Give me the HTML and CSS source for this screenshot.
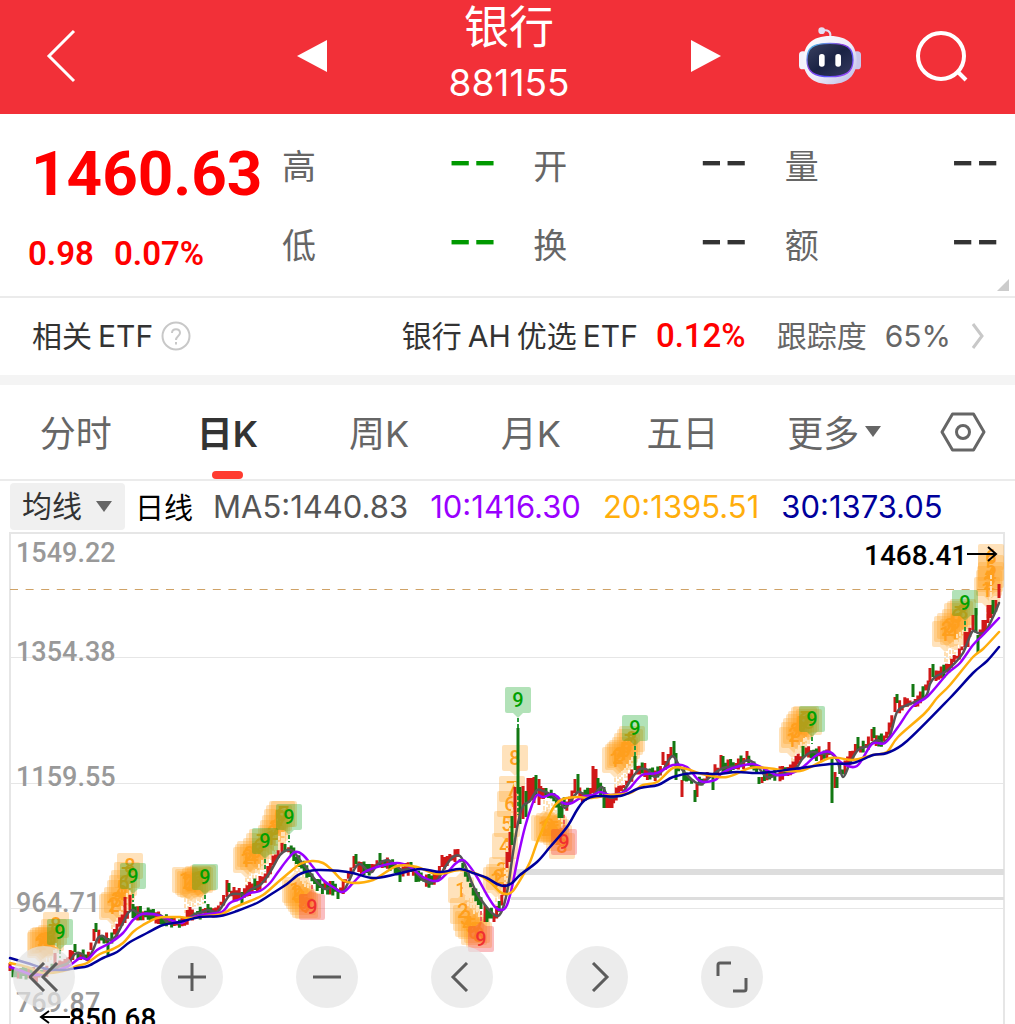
FILE: index.html
```html
<!DOCTYPE html>
<html lang="zh-CN">
<head>
<meta charset="utf-8">
<meta name="viewport" content="width=device-width, initial-scale=1">
<title>银行 881155</title>
<link rel="stylesheet" href="styles.css">
</head>
<body>
<header class="topbar">
  <button class="icon-btn back" aria-label="返回">
    <svg width="30" height="54" viewBox="0 0 30 54" fill="none" stroke="#fff" stroke-width="3"><path d="M28 2 3 27l25 25"/></svg>
  </button>
  <div class="switcher">
    <button class="icon-btn" aria-label="上一个"><svg width="30" height="34" viewBox="0 0 30 34"><path d="M30 1v32L0 17z" fill="#fff"/></svg></button>
    <h1 class="title"><span class="name">银行</span><span class="code">881155</span></h1>
    <button class="icon-btn" aria-label="下一个"><svg width="30" height="34" viewBox="0 0 30 34"><path d="M0 1v32l30-16z" fill="#fff"/></svg></button>
  </div>
  <div class="actions">
    <button class="icon-btn" aria-label="智能助手">
      <svg width="62" height="58" viewBox="27 17 186 174">
        <defs>
          <linearGradient id="shell" x1="0" y1="0" x2="1" y2="1"><stop offset="0" stop-color="#fff"/><stop offset=".55" stop-color="#eceaf8"/><stop offset="1" stop-color="#b9b8e6"/></linearGradient>
          <linearGradient id="face" x1="0" y1="0" x2="1" y2="1"><stop offset="0" stop-color="#3b4160"/><stop offset=".5" stop-color="#1a2344"/><stop offset="1" stop-color="#353a60"/></linearGradient>
          <linearGradient id="rim" x1="0" y1="0" x2="1" y2="1"><stop offset="0" stop-color="#3fd8e8"/><stop offset=".4" stop-color="#8a3be0"/><stop offset=".7" stop-color="#5a55ff"/><stop offset="1" stop-color="#b53cf0"/></linearGradient>
        </defs>
        <path d="M98 28c14-4 25 2 23 18" fill="none" stroke="#e2def2" stroke-width="6"/>
        <circle cx="95" cy="28" r="10" fill="#e4e0f4"/>
        <rect x="27" y="90" width="24" height="54" rx="11" fill="#f4f2fb"/>
        <rect x="189" y="90" width="24" height="54" rx="11" fill="#c9c7ec"/>
        <path d="M120 44c54 0 80 28 80 73 0 46-28 72-80 72s-80-26-80-72c0-45 26-73 80-73z" fill="url(#shell)"/>
        <path d="M120 66c50 0 69 12 69 50 0 36-21 50-69 50s-69-14-69-50c0-38 19-50 69-50z" fill="url(#face)" stroke="url(#rim)" stroke-width="4"/>
        <rect x="87" y="98" width="17" height="38" rx="8" fill="#fff"/>
        <rect x="136" y="98" width="17" height="38" rx="8" fill="#fff"/>
      </svg>
    </button>
    <button class="icon-btn" aria-label="搜索">
      <svg width="54" height="54" viewBox="0 0 54 54" fill="none" stroke="#fff" stroke-width="4"><circle cx="26" cy="27" r="23"/><path d="m42 42 9 9"/></svg>
    </button>
  </div>
</header>

<main class="page">
  <section class="quote">
    <div class="price">
      <strong class="last">1460.63</strong>
      <div class="change"><span>0.98</span><span>0.07%</span></div>
    </div>
    <dl class="stats">
      <div><dt>高</dt><dd class="down">--</dd></div>
      <div><dt>开</dt><dd>--</dd></div>
      <div><dt>量</dt><dd>--</dd></div>
      <div><dt>低</dt><dd class="down">--</dd></div>
      <div><dt>换</dt><dd>--</dd></div>
      <div><dt>额</dt><dd>--</dd></div>
    </dl>
    <i class="corner"></i>
  </section>

  <section class="etf">
    <span class="etf-title"><span>相关</span><span>ETF</span></span>
    <button class="icon-btn help" aria-label="说明">
      <svg width="30" height="30" viewBox="0 0 30 30" fill="none" stroke="#c8c8c8" stroke-width="2"><circle cx="15" cy="15" r="13.5"/><path d="M11 12c0-5 8-5 8 0 0 3-4 3-4 7"/><path d="M15 21v2.500"/></svg>
    </button>
    <a class="etf-link" href="#etf">
      <span class="etf-name"><span>银行</span><span>AH</span><span>优选</span><span>ETF</span></span>
      <span class="etf-rate">0.12%</span>
      <span class="etf-track"><span>跟踪度</span><span>65%</span></span>
      <svg width="14" height="28" viewBox="0 0 14 28" fill="none" stroke="#c8c8c8" stroke-width="3"><path d="m2 2 9 12-9 12"/></svg>
    </a>
  </section>

  <nav class="tabs">
    <button class="tab">分时</button>
    <button class="tab active">日K</button>
    <button class="tab">周K</button>
    <button class="tab">月K</button>
    <button class="tab">五日</button>
    <button class="tab">更多<svg width="16" height="11" viewBox="0 0 16 11"><path d="M0 0h16L8 11z" fill="#666"/></svg></button>
    <button class="icon-btn settings" aria-label="设置">
      <svg width="46" height="40" viewBox="0 0 46 40" fill="none" stroke="#666" stroke-width="3" stroke-linejoin="round"><path d="M12.500 2h21L44 20 33.500 38h-21L2 20z"/><circle cx="23" cy="20" r="6.500"/></svg>
    </button>
  </nav>

  <section class="indicators">
    <label class="picker">
      <select aria-label="指标"><option>均线</option><option>BOLL</option></select>
      <svg width="16" height="11" viewBox="0 0 16 11"><path d="M0 0h16L8 11z" fill="#666"/></svg>
    </label>
    <span class="period">日线</span>
    <div class="averages">
      <span class="ma5">MA5:1440.83</span>
      <span class="ma10">10:1416.30</span>
      <span class="ma20">20:1395.51</span>
      <span class="ma30">30:1373.05</span>
    </div>
  </section>

  <section class="chart">
    <svg class="plot" id="plot" viewBox="0 531 1015 560" role="img" aria-label="日K线图">
      <g class="grid">
        <path d="M10 657.500h994M10 783.500h994M10 908.500h994M10 1034.500h994"/>
        <rect class="frame" x="10" y="533" width="994" height="502"/>
        <path class="gap-wide" d="M516 872h488"/>
        <path class="gap-thin" d="M511 898.500h493"/>
        <path class="last-line" d="M10 589.500h994"/>
      </g>
      <g class="axis">
        <text x="16" y="562">1549.22</text>
        <text x="16" y="661">1354.38</text>
        <text x="16" y="786">1159.55</text>
        <text x="16" y="912">964.71</text>
        <text x="16" y="1012">769.87</text>
      </g>
      <g id="badges"></g>
      <g id="candles"></g>
      <g id="lines"></g>
      <g class="extremes">
        <text x="864" y="565">1468.41</text>
        <text x="69" y="1028">850.68</text>
        <path d="M967 554h29m-8-7 8 7-8 7M70 1017H41m8-6-8 6 8 6"/>
      </g>
    </svg>
    <div class="toolbar">
      <button class="round first" aria-label="最早"><svg width="30" height="30" viewBox="0 0 30 30"><path d="M15 1 1 15l14 14M28 1 14 15l14 14"/></svg></button>
      <button class="round" aria-label="放大"><svg width="30" height="30" viewBox="0 0 30 30"><path d="M15 1v28M1 15h28"/></svg></button>
      <button class="round" aria-label="缩小"><svg width="30" height="30" viewBox="0 0 30 30"><path d="M1 15h28"/></svg></button>
      <button class="round" aria-label="向左"><svg width="30" height="30" viewBox="0 0 30 30"><path d="M20 1 6 15l14 14"/></svg></button>
      <button class="round" aria-label="向右"><svg width="30" height="30" viewBox="0 0 30 30"><path d="m11 1 14 14-14 14"/></svg></button>
      <button class="round" aria-label="全屏"><svg width="32" height="32" viewBox="0 0 32 32"><path d="M2 15V4q0-2 2-2h11M17 30h11q2 0 2-2V17"/></svg></button>
    </div>
  </section>
</main>
<script src="chart.js"></script>
</body>
</html>
```
FILE: styles.css
```css
* { box-sizing: border-box; }
body {
  margin: 0;
  height: 100vh;
  display: flex;
  flex-direction: column;
  overflow: hidden;
  background: #fff;
  color: #333;
  font-family: Inter, "Noto Sans CJK SC", sans-serif;
}
button, select { font: inherit; color: inherit; border: 0; padding: 0; background: none; }
svg { display: block; }
.icon-btn { display: flex; align-items: center; justify-content: center; }

.topbar {
  display: grid;
  grid-template-columns: 1fr 424px 1fr;
  align-items: center;
  height: 114px;
  flex: none;
  padding: 0 0 2px 3px;
  background: #f23038;
  color: #fff;
}
.back { margin-left: 43px; justify-self: start; }
.switcher { display: flex; justify-content: space-between; align-items: center; }
.title { margin: 0; display: flex; flex-direction: column; align-items: center; font-weight: 400; }
.name { font-size: 45px; line-height: 54px; }
.code { font-size: 37px; line-height: 56px; }
.actions { display: flex; justify-content: flex-end; align-items: center; gap: 54px; padding-right: 46px; }

.page { flex: 1; min-height: 0; display: flex; flex-direction: column; }

.quote {
  position: relative;
  display: grid;
  grid-template-columns: 282px 1fr;
  padding: 0 15px 0 0;
  height: 184px;
  flex: none;
  border-bottom: 2px solid #ebebeb;
}
.price { color: #f00; font-family: Roboto, sans-serif; padding: 24px 0 0 28px; }
.last { display: block; padding-left: 3px; font-size: 62px; line-height: 72px; font-weight: 700; }
.change { display: flex; gap: 20px; font-size: 33px; line-height: 40px; font-weight: 600; padding-top: 24px; }
.stats { margin: 0; padding-top: 11px; display: grid; grid-template-columns: repeat(3, 1fr); column-gap: 36px; grid-auto-rows: 79px; }
.stats div { display: flex; justify-content: space-between; align-items: center; }
.stats dt { font-size: 34px; color: #666; }
.stats dd { margin: 0; padding-bottom: 8px; font-size: 54px; line-height: 70px; font-weight: 400; }
.stats .down { color: #090; }
.corner { position: absolute; right: 6px; bottom: 5px; border: 6px solid; border-color: transparent #ccc #ccc transparent; }

.etf { display: flex; align-items: center; height: 77px; flex: none; padding: 0 30px 2px 32px; font-size: 30px; line-height: 40px; }
.etf-title, .etf-name { display: flex; align-items: baseline; gap: 6px; }
.help { margin-left: 8px; }
.etf-link { margin-left: auto; display: flex; align-items: center; color: inherit; text-decoration: none; }
.etf-rate { margin-left: 18px; color: #f00; font: 500 33px/40px Roboto, sans-serif; }
.etf-track { margin: 0 20px 0 31px; display: flex; align-items: baseline; gap: 18px; color: #666; }

.tabs { display: grid; grid-template-columns: repeat(6, 1fr) 105px; height: 106px; flex: none; border-top: 10px solid #f4f4f4; border-bottom: 2px solid #ebebeb; color: #666; }
.tab { position: relative; display: flex; align-items: center; justify-content: center; gap: 6px; padding-bottom: 2px; font-size: 36px; }
.tab.active { color: #333; font-weight: 600; }
.tab.active::after { content: ""; position: absolute; bottom: 0; width: 31px; height: 8px; border-radius: 4px; background: #ff3b30; }

.indicators { display: flex; align-items: center; height: 50px; flex: none; padding-left: 10px; font-size: 29px; }
.picker { position: relative; display: flex; align-items: center; width: 115px; height: 47px; background: #f0f0f0; border-radius: 4px; color: #333; }
.picker select { appearance: none; width: 115px; height: 47px; padding-left: 12px; font-size: 30px; }
.picker svg { position: absolute; right: 13px; pointer-events: none; }
.period { margin-left: 10px; color: #000; }
.averages { display: flex; gap: 22px; margin-left: 20px; font-size: 31px; }
.ma5 { color: #555; }
.ma10 { color: #90f; }
.ma20 { color: #ffae0c; }
.ma30 { color: #00009b; }

.chart { position: relative; flex: 1; min-height: 0; overflow: hidden; }
.plot { width: 100%; height: auto; }
.grid path, .grid rect { fill: none; stroke: #e6e6e6; stroke-width: 1; }
.grid .frame { stroke-width: 2; }
.grid .gap-wide { stroke: #ddd; stroke-width: 6; }
.grid .gap-thin { stroke: #ddd; stroke-width: 3; }
.grid .last-line { stroke: #cfa266; stroke-dasharray: 8 7.600; }
.axis { font: 500 27px Roboto, sans-serif; fill: #999; }
.extremes { font: 500 28px Roboto, sans-serif; fill: #000; }
.extremes path { fill: none; stroke: #000; stroke-width: 2; }
.badge text { font: 500 20px Roboto, sans-serif; text-anchor: middle; }
.badge.seq rect, .badge.seq .tail { fill: rgba(255, 160, 30, .3); }
.badge.seq text { fill: #ffa01e; }
.badge.top rect, .badge.top .tail { fill: rgba(0, 160, 20, .3); }
.badge.top text { fill: #00a000; }
.badge.bottom rect, .badge.bottom .tail { fill: rgba(240, 50, 60, .32); }
.badge.bottom text { fill: #f03030; }
.stem { fill: none; stroke-width: 2; stroke-dasharray: 4 2; }
.stem.seq { stroke: #ffe0b5; }
.stem.top { stroke: #2a9a3a; }
.stem.bottom { stroke: #f06060; }
.up-bars { fill: none; stroke: #d01818; stroke-width: 3; }
.down-bars { fill: none; stroke: #137813; stroke-width: 3; }
.line { fill: none; stroke-width: 2.500; stroke-linejoin: round; stroke-linecap: round; }
.line.l5 { stroke: #555; }
.line.l10 { stroke: #90f; }
.line.l20 { stroke: #ffae0c; }
.line.l30 { stroke: #00009b; }

.toolbar { position: absolute; left: 13px; bottom: 16px; display: flex; gap: 73px; }
.round { width: 62px; height: 62px; border-radius: 50%; background: rgba(228, 228, 228, .7); display: flex; align-items: center; justify-content: center; }
.round.first { margin-right: 13px; }
.round svg { fill: none; stroke: #5c5c5c; stroke-width: 3; }
```
FILE: chart.js
```js
// Moving averages as x,y pairs in plot coordinates.
const averages = {
  l5: "10,967 22,973 40,975 55,968 68,963 75,954 82,954 87,960 93,950 98,938 103,936 108,940 115,937 122,925 128,913 133,910 138,913 150,915 160,915 167,922 177,923 185,921 193,915 203,912 208,910 217,912 223,905 230,895 240,894 245,895 250,890 260,885 267,877 273,867 280,855 287,850 293,851 300,860 308,870 317,882 325,889 333,887 342,892 348,883 355,868 360,864 367,870 372,872 378,864 387,860 393,863 402,870 412,868 418,875 427,882 437,880 445,867 453,857 460,856 465,865 472,883 478,895 485,905 492,913 498,916 503,908 508,887 513,853 518,823 523,806 530,801 537,790 543,791 552,795 558,800 565,808 570,802 578,792 585,795 593,795 602,787 608,797 615,797 623,792 632,778 640,769 648,770 655,777 663,770 667,763 673,756 680,767 687,775 695,782 702,784 710,777 723,768 737,766 748,760 757,766 767,777 777,775 788,773 797,767 803,758 812,752 822,754 830,753 837,760 843,777 850,763 858,750 868,746 877,740 883,743 890,735 897,712 905,706 925,697 930,684 935,677 945,672 953,665 963,653 972,632 978,633 985,632 993,617 999,603",
  l10: "10,967 22,971 33,975 47,973 67,967 80,958 88,959 97,950 110,943 123,933 133,920 142,914 153,914 163,917 173,921 182,923 190,918 207,914 222,912 230,903 240,899 250,893 260,891 270,883 278,872 287,860 295,852 303,855 313,867 323,880 333,887 343,892 353,883 363,873 377,867 397,863 410,867 423,877 437,881 447,873 455,864 462,860 467,863 477,877 487,895 495,907 502,910 507,905 512,887 518,857 525,827 532,805 537,795 543,797 552,794 558,797 563,803 572,803 582,797 593,795 600,792 610,795 622,793 630,788 642,775 657,773 673,765 687,767 700,781 715,780 722,773 733,768 752,764 763,768 777,775 792,773 803,767 817,755 830,752 842,763 857,766 872,744 885,743 898,727 912,707 928,696 948,673 960,663 973,645 983,635 999,618",
  l20: "10,963 27,967 43,973 63,971 77,966 87,963 100,954 113,949 123,943 133,932 143,925 157,918 170,917 180,917 190,918 207,916 222,914 233,908 250,901 263,895 277,883 290,872 300,864 312,861 323,863 333,871 342,880 353,883 373,880 397,866 417,867 437,874 460,870 477,874 490,882 500,892 507,894 513,891 522,877 530,862 538,840 547,820 555,805 563,799 578,797 590,798 610,795 630,793 643,785 657,782 673,768 687,769 702,774 727,777 750,768 767,768 800,771 830,758 853,760 873,755 887,752 898,737 925,713 937,698 950,685 973,657 983,649 999,632",
  l30: "10,958 27,963 47,969 63,970 77,968 88,966 103,958 117,952 130,942 147,933 163,925 180,922 200,917 220,916 237,911 257,903 273,893 287,884 300,874 317,870 340,871 353,873 373,878 397,874 420,869 440,872 460,869 473,873 487,878 497,884 505,886 512,883 520,875 537,862 550,847 567,827 577,810 585,800 597,796 620,796 640,788 658,785 673,777 693,773 717,774 737,772 760,773 793,769 830,764 853,763 873,755 887,753 907,741 950,698 973,673 987,661 999,647"
};

// Days with an unusual range: x, high, low, direction.
const wide = [
  [10,963,971,1],[55,953,966,1],[75,944,952,0],[94,929,941,1],[96,923,932,0],[108,938,955,0],[125,897,923,1],[130,895,910,1],[133,904,918,0],
  [190,907,917,1],[208,904,913,0],[227,880,897,1],[229,883,892,0],[242,892,905,0],[282,843,853,1],[285,844,852,0],[338,890,899,0],
  [354,856,868,1],[356,854,864,0],[380,853,865,0],[400,870,882,0],[411,862,872,0],[442,855,867,1],[458,849,857,1],
  [485,905,922,1],[487,908,922,0],[494,914,922,1],[507,852,868,1],[510,832,862,1],[512,816,845,0],[515,787,828,1],[518,728,793,0],[520,787,824,0],[523,786,819,1],
  [526,791,817,0],[528,778,803,1],[531,778,800,1],[534,777,803,1],[536,775,795,0],[539,779,805,1],[559,803,818,0],[562,806,818,0],[575,779,793,1],[578,774,793,0],
  [593,766,793,1],[596,769,792,1],[598,778,790,0],[604,787,808,0],[606,797,808,1],[609,797,808,1],[612,797,808,1],[635,756,770,0],
  [663,752,765,1],[671,747,758,1],[674,741,756,0],[676,753,780,0],[682,780,797,1],[695,790,802,0],[697,782,797,1],[713,777,790,0],
  [721,755,770,1],[723,756,772,0],[747,751,762,1],[759,777,784,0],[762,777,783,1],[796,756,768,1],[803,746,757,0],[829,742,755,1],
  [832,758,803,0],[835,772,788,1],[837,777,788,0],[850,751,765,1],[858,737,750,0],[872,729,741,1],[874,727,738,0],[895,697,712,1],[897,694,703,0],
  [913,684,697,0],[930,668,682,1],[933,664,677,0],[965,632,647,1],[968,632,647,1],[973,615,630,1],[976,608,633,0],[978,635,653,0],[983,620,635,1],
  [988,605,623,1],[991,605,618,1],[993,600,614,0],[999,584,598,1]
];

// Sequence counters: class, then x,y of every box centre in counting order.
const runs = [
  ["seq", 1, "40,945 41,943 43,941 45,940 48,940 51,938 54,932 56,925"],
  ["seq", 1, "112,907 114,905 117,900 120,893 122,888 124,883 127,875 130,866"],
  ["seq", 1, "185,880 188,882 190,884 193,885 195,881 198,879 200,880 203,878"],
  ["seq", 1, "246,860 248,857 250,854 253,857 256,851 259,846 262,842"],
  ["seq", 1, "271,838 273,833 275,828 277,822 279,818 282,814 284,814"],
  ["seq", -1, "295,890 297,893 299,896 301,899 303,902 305,905 308,906"],
  ["seq", -1, "461,890 463,911 466,918 468,924 471,926 474,932 477,930 479,935"],
  ["seq", 1, "496,880 499,877 502,870 505,846 507,824 510,804 512,789 515,758"],
  ["seq", -1, "544,828 547,829 549,826 552,830 554,829 556,832 559,838 562,846"],
  ["seq", 1, "615,760 618,757 620,755 622,753 625,750 627,746 630,742 632,739"],
  ["seq", 1, "792,740 794,735 796,731 799,727 801,724 804,720 806,719 809,722"],
  ["seq", 1, "945,634 947,629 950,626 953,632 955,622 957,616 960,614 963,612"],
  ["seq", 1, "987,590 989,583 990,579 991,575 991,568 991,557"]
];
const nines = [
  ["top", "60,932 133,876 205,877 265,841 289,817 518,700 635,728 812,719 965,603"],
  ["bottom", "312,907 481,939 564,842"]
];

const NS = "http://www.w3.org/2000/svg";
const add = (parent, tag, attrs, text) => {
  const el = document.createElementNS(NS, tag);
  for (const k in attrs) el.setAttribute(k, attrs[k]);
  if (text !== undefined) el.textContent = text;
  parent.append(el);
  return el;
};
const pairs = s => s.split(" ").map(p => p.split(",").map(Number));
const trend = pairs(averages.l5);
const levelAt = x => {
  for (let i = 1; i < trend.length; i++) {
    const [x0, y0] = trend[i - 1], [x1, y1] = trend[i];
    if (x <= x1) return y0 + (y1 - y0) * (x - x0) / (x1 - x0);
  }
  return trend[trend.length - 1][1];
};

const badges = document.getElementById("badges");
function badge(kind, side, x, y, n) {
  const end = levelAt(x) - side * 8;
  if ((end - y) * side > 18) add(badges, "path", { class: "stem " + kind, d: `M${x} ${y + side * 18}V${end}` });
  const g = add(badges, "g", { class: "badge " + kind });
  add(g, "rect", { x: x - 13, y: y - 13, width: 26, height: 26, rx: 2 });
  add(g, "path", { class: "tail", d: `M${x - 5} ${y + side * 13}h10l-5 ${side * 5}z` });
  add(g, "text", { x, y: y + 7 }, n);
}
runs.forEach(([kind, side, list]) => pairs(list).forEach(([x, y], i) => badge(kind, side, x, y, i + 1)));
nines.forEach(([kind, list]) => pairs(list).forEach(([x, y]) => badge(kind, kind === "top" ? 1 : -1, x, y, 9)));

let up = "", down = "", seed = 7;
const random = () => (seed = (seed * 16807) % 2147483647) / 2147483647;
for (let x = 13; x < 998; x += 2.6) {
  const a = random(), b = random(), c = random();
  if (wide.some(w => Math.abs(w[0] - x) < 1.4)) continue;
  const y = (levelAt(x) + levelAt(Math.min(x + 5, 999))) / 2;
  const slope = levelAt(x + 4) - levelAt(x - 4);
  const bar = `M${x.toFixed(1)} ${(y - 1 - a * 7).toFixed(1)}V${(y + 1 + b * 7).toFixed(1)}`;
  if (c > .5 + slope / 16) up += bar; else down += bar;
}
wide.forEach(([x, hi, lo, rise]) => { const bar = `M${x} ${hi}V${lo}`; if (rise) up += bar; else down += bar; });
const candles = document.getElementById("candles");
add(candles, "path", { class: "up-bars", d: up });
add(candles, "path", { class: "down-bars", d: down });

// Smooth curve through the points.
const curve = pts => {
  let d = `M${pts[0]}`;
  for (let i = 0; i < pts.length - 1; i++) {
    const p0 = pts[i - 1] || pts[i], p1 = pts[i], p2 = pts[i + 1], p3 = pts[i + 2] || p2;
    d += `C${p1[0] + (p2[0] - p0[0]) / 6} ${p1[1] + (p2[1] - p0[1]) / 6} ${p2[0] - (p3[0] - p1[0]) / 6} ${p2[1] - (p3[1] - p1[1]) / 6} ${p2}`;
  }
  return d;
};
for (const key in averages) add(document.getElementById("lines"), "path", { class: "line " + key, d: curve(pairs(averages[key])) });
```
